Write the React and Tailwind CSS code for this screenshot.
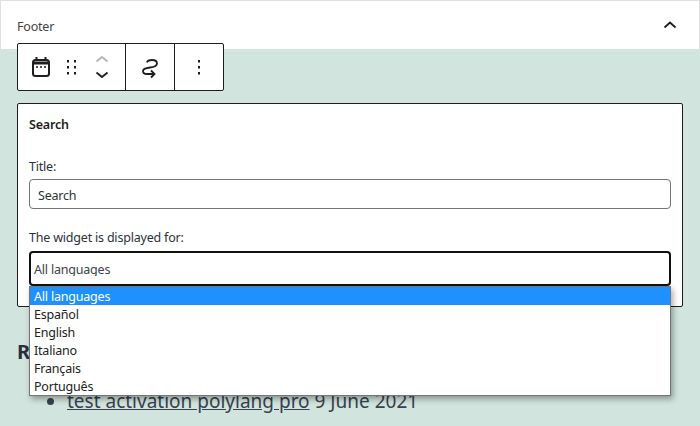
const font = { fontFamily: '"Noto Sans", sans-serif' };

const languages = ['All languages', 'Español', 'English', 'Italiano', 'Français', 'Português'];

const CalendarIcon = () => (
    <svg width="24" height="24" viewBox="0 0 24 24" fill="none" stroke="#1e1e1e">
        <rect x="4" y="5" width="16" height="16" rx="2.500" strokeWidth="2" />
        <path d="M4 8h16" strokeWidth="3" />
        <path d="M7.500 2v4M16.500 2v4" strokeWidth="2" />
        <path d="M7 12h2M11 12h2M15 12h2" strokeWidth="1.500" />
    </svg>
);

const DragIcon = () => (
    <svg width="18" height="24" viewBox="0 0 18 24" fill="#1e1e1e">
        <path d="M5 5h2v2.500H5zM12 5h2v2.500h-2zM5 11h2v2.500H5zM12 11h2v2.500h-2zM5 17h2v2.500H5zM12 17h2v2.500h-2z" />
    </svg>
);

const Chevron = ({ up, color }) => (
    <svg width="24" height="12" viewBox="0 0 24 12" fill="none" stroke={color} strokeWidth="1.800">
        <path d={up ? 'M6.500 8.500L12 4l5.500 4.500' : 'M6.500 3.500L12 8l5.500-4.500'} />
    </svg>
);

const LoopIcon = () => (
    <svg width="24" height="24" viewBox="0 0 24 24" fill="none" stroke="#1e1e1e" strokeWidth="1.800">
        <path d="M9 7.500C9.500 5.500 11.500 5 14 5c3 0 5 1.500 5 3.500 0 2.500-2.500 3.500-7 4-4 .5-7 1-7 3.500 0 2 2 3 4 3h7.500" />
        <path d="M13 15.500l3.500 3.500-3.500 3.500" />
    </svg>
);

const MoreIcon = () => (
    <svg width="24" height="24" viewBox="0 0 24 24" fill="#1e1e1e">
        <path d="M11 5h2v2.500h-2zM11 11h2v2.500h-2zM11 17h2v2.500h-2z" />
    </svg>
);

export default function App() {
    return (
        <div style={font} className="relative w-[700px] h-[426px] overflow-hidden bg-[#d1e4dd] text-[#1e1e1e]">
            {/* footer panel header */}
            <div className="h-[49px] bg-white border-t border-x border-[#e0e0e0] flex items-center justify-between pl-4 pr-[17px] text-[12.500px] tracking-[-0.2px]">
                <span className="mt-[5px] text-[#444]">Footer</span>
                <svg width="24" height="24" viewBox="0 0 24 24" fill="none" stroke="#1e1e1e" strokeWidth="1.800">
                    <path d="M6.500 14.500L12 9.500l5.500 5" />
                </svg>
            </div>

            <div className="px-[17px]">
                {/* block toolbar */}
                <div className="-mt-[6px] w-[207px] h-[48px] bg-white border border-[#1e1e1e] rounded-[2px] flex relative">
                    <div className="w-[108px] flex items-center border-r border-[#1e1e1e] pl-[11px]">
                        <CalendarIcon />
                        <div className="ml-[9px]"><DragIcon /></div>
                        <div className="ml-[10px] flex flex-col">
                            <Chevron up color="#b5b5b5" />
                            <div className="mt-[4px]"><Chevron color="#1e1e1e" /></div>
                        </div>
                    </div>
                    <div className="w-[49px] flex items-center justify-center border-r border-[#1e1e1e]">
                        <LoopIcon />
                    </div>
                    <div className="flex-1 flex items-center justify-center">
                        <MoreIcon />
                    </div>
                </div>

                {/* widget form */}
                <div className="mt-[12px] h-[204px] bg-white border border-[#1e1e1e] rounded-[2px] px-[11px] text-[12.500px] tracking-[-0.2px]">
                    <h3 className="mt-[11px] font-semibold leading-[20px]">Search</h3>
                    <label className="block mt-[23px] leading-[18px] text-[#2c3338]">Title:</label>
                    <div className="mt-[3px] h-[30px] border border-[#757575] rounded-[4px] flex items-center pt-[4px] pl-2 text-[#2c3338]">Search</div>
                    <label className="block mt-[20px] leading-[18px] text-[#2c3338]">The widget is displayed for:</label>
                    <div className="mt-[4px] h-[35px] border-2 border-[#111] rounded-[4px] pl-[3px] pt-[8px] text-[#3c434a]">
                        <div className="h-[15px] leading-[18px] overflow-hidden">All languages</div>
                    </div>
                </div>

                {/* page content behind the dropdown */}
                <div className="mt-[30px] text-[20px] leading-[30px] font-bold text-[#28303d]">Recent</div>
                <ul className="mt-[19px] pl-[50px] list-disc text-[19px] leading-[30px] text-[#39414d]">
                    <li><span className="underline">test activation polylang pro</span> 9 June 2021</li>
                </ul>
            </div>

            {/* open select list */}
            <ul className="absolute left-[29px] top-[286px] w-[642px] h-[110px] bg-white border border-[#767676] shadow-[2px_3px_6px_rgba(0,0,0,0.35)] text-[12.500px] tracking-[-0.2px] text-[#222]">
                {languages.map((lang, index) => (
                    <li key={lang} className={`h-[18px] pt-[1px] pl-1 leading-[18px] ${index === 0 ? 'bg-[#1e90ff] text-white' : ''}`}>{lang}</li>
                ))}
            </ul>
        </div>
    );
}
